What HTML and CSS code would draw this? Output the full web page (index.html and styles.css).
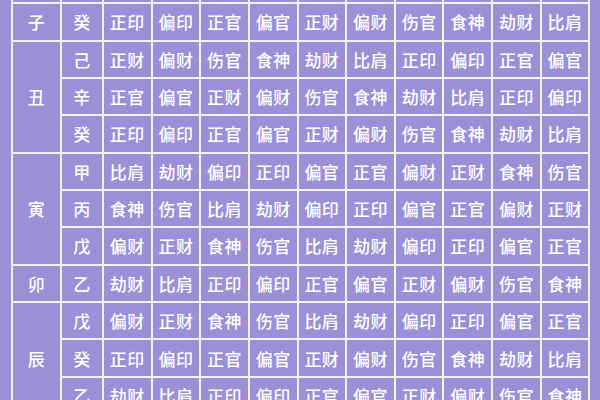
FILE: index.html
```html
<!DOCTYPE html>
<html lang="zh-CN">
<head>
<meta charset="utf-8">
<title>地支藏干十神表</title>
<link rel="stylesheet" href="styles.css">
</head>
<body>
<div class="table">
  <div class="cell"></div><div class="cell"></div>
  <div class="cell"></div><div class="cell"></div><div class="cell"></div><div class="cell"></div><div class="cell"></div>
  <div class="cell"></div><div class="cell"></div><div class="cell"></div><div class="cell"></div><div class="cell"></div>

  <div class="cell branch">子</div><div class="cell">癸</div>
  <div class="cell">正印</div><div class="cell">偏印</div><div class="cell">正官</div><div class="cell">偏官</div><div class="cell">正财</div><div class="cell">偏财</div><div class="cell">伤官</div><div class="cell">食神</div><div class="cell">劫财</div><div class="cell">比肩</div>

  <div class="cell branch span3">丑</div><div class="cell">己</div>
  <div class="cell">正财</div><div class="cell">偏财</div><div class="cell">伤官</div><div class="cell">食神</div><div class="cell">劫财</div><div class="cell">比肩</div><div class="cell">正印</div><div class="cell">偏印</div><div class="cell">正官</div><div class="cell">偏官</div>
  <div class="cell">辛</div>
  <div class="cell">正官</div><div class="cell">偏官</div><div class="cell">正财</div><div class="cell">偏财</div><div class="cell">伤官</div><div class="cell">食神</div><div class="cell">劫财</div><div class="cell">比肩</div><div class="cell">正印</div><div class="cell">偏印</div>
  <div class="cell">癸</div>
  <div class="cell">正印</div><div class="cell">偏印</div><div class="cell">正官</div><div class="cell">偏官</div><div class="cell">正财</div><div class="cell">偏财</div><div class="cell">伤官</div><div class="cell">食神</div><div class="cell">劫财</div><div class="cell">比肩</div>

  <div class="cell branch span3">寅</div><div class="cell">甲</div>
  <div class="cell">比肩</div><div class="cell">劫财</div><div class="cell">偏印</div><div class="cell">正印</div><div class="cell">偏官</div><div class="cell">正官</div><div class="cell">偏财</div><div class="cell">正财</div><div class="cell">食神</div><div class="cell">伤官</div>
  <div class="cell">丙</div>
  <div class="cell">食神</div><div class="cell">伤官</div><div class="cell">比肩</div><div class="cell">劫财</div><div class="cell">偏印</div><div class="cell">正印</div><div class="cell">偏官</div><div class="cell">正官</div><div class="cell">偏财</div><div class="cell">正财</div>
  <div class="cell">戊</div>
  <div class="cell">偏财</div><div class="cell">正财</div><div class="cell">食神</div><div class="cell">伤官</div><div class="cell">比肩</div><div class="cell">劫财</div><div class="cell">偏印</div><div class="cell">正印</div><div class="cell">偏官</div><div class="cell">正官</div>

  <div class="cell branch">卯</div><div class="cell">乙</div>
  <div class="cell">劫财</div><div class="cell">比肩</div><div class="cell">正印</div><div class="cell">偏印</div><div class="cell">正官</div><div class="cell">偏官</div><div class="cell">正财</div><div class="cell">偏财</div><div class="cell">伤官</div><div class="cell">食神</div>

  <div class="cell branch span3">辰</div><div class="cell">戊</div>
  <div class="cell">偏财</div><div class="cell">正财</div><div class="cell">食神</div><div class="cell">伤官</div><div class="cell">比肩</div><div class="cell">劫财</div><div class="cell">偏印</div><div class="cell">正印</div><div class="cell">偏官</div><div class="cell">正官</div>
  <div class="cell">癸</div>
  <div class="cell">正印</div><div class="cell">偏印</div><div class="cell">正官</div><div class="cell">偏官</div><div class="cell">正财</div><div class="cell">偏财</div><div class="cell">伤官</div><div class="cell">食神</div><div class="cell">劫财</div><div class="cell">比肩</div>
  <div class="cell">乙</div>
  <div class="cell">劫财</div><div class="cell">比肩</div><div class="cell">正印</div><div class="cell">偏印</div><div class="cell">正官</div><div class="cell">偏官</div><div class="cell">正财</div><div class="cell">偏财</div><div class="cell">伤官</div><div class="cell">食神</div>
</div>
</body>
</html>
```
FILE: styles.css
```css
html, body {
  margin: 0;
  padding: 0;
  width: 600px;
  height: 400px;
  overflow: hidden;
  background: #9b8fd8;
  font-family: "Noto Sans CJK SC", "Noto Sans", sans-serif;
}

.table {
  display: grid;
  grid-template-columns: 47px 40px repeat(10, 46.65px);
  grid-auto-rows: 35.35px;
  gap: 2px;
  padding: 2px;
  background: #f3f1fb;
  width: max-content;
  margin-left: 11px;
  margin-top: -35.1px;
}

.cell {
  background: #9b8fd8;
  color: #ffffff;
  font-size: 17px;
  font-weight: 500;
  line-height: 1;
  display: flex;
  align-items: center;
  justify-content: center;
  letter-spacing: 0.5px;
}

.span3 {
  grid-row: span 3;
}
```
